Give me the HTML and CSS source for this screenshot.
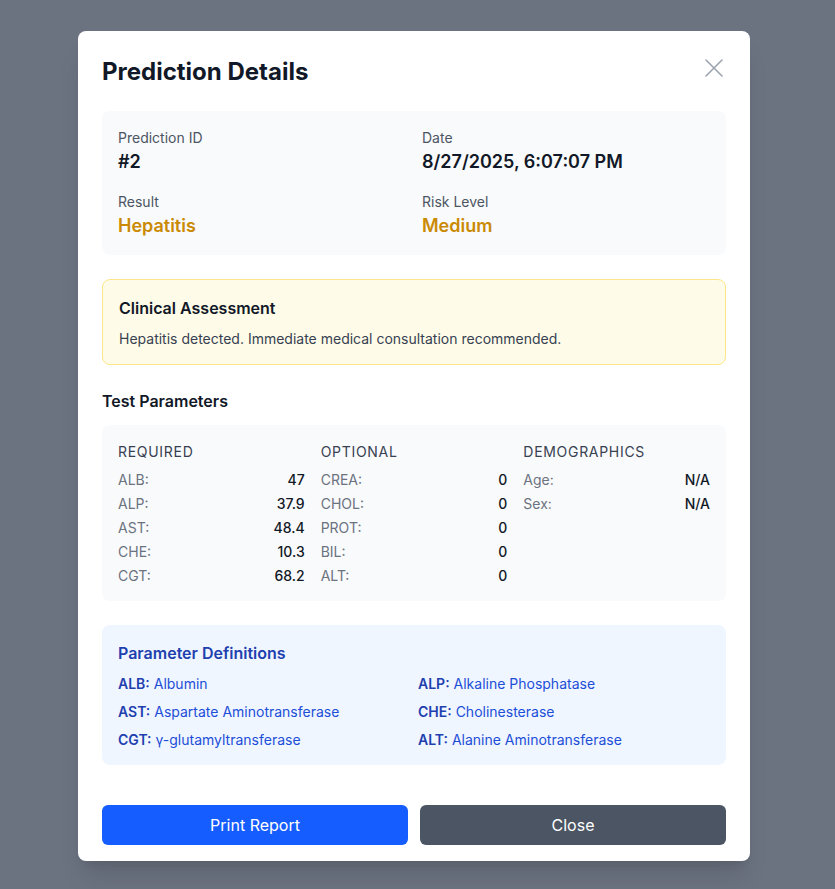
FILE: index.html
```html
<!DOCTYPE html>
<html lang="en">
<head>
<meta charset="utf-8">
<title>Prediction Details</title>
<link rel="stylesheet" href="styles.css">
</head>
<body>
<div class="overlay">
  <div class="modal">
    <div class="modal-header">
      <h2 class="title">Prediction Details</h2>
      <button class="close-x" aria-label="Close">
        <svg width="24" height="24" viewBox="0 0 24 24" fill="none" stroke="currentColor" stroke-width="1.6" stroke-linecap="round"><path d="M4 4L20 20M20 4L4 20"/></svg>
      </button>
    </div>

    <div class="info-box">
      <div class="info-item">
        <div class="info-label">Prediction ID</div>
        <div class="info-value">#2</div>
      </div>
      <div class="info-item">
        <div class="info-label">Date</div>
        <div class="info-value">8/27/2025, 6:07:07 PM</div>
      </div>
      <div class="info-item">
        <div class="info-label">Result</div>
        <div class="info-value warn">Hepatitis</div>
      </div>
      <div class="info-item">
        <div class="info-label">Risk Level</div>
        <div class="info-value warn">Medium</div>
      </div>
    </div>

    <div class="assessment">
      <h3 class="assessment-title">Clinical Assessment</h3>
      <p class="assessment-text">Hepatitis detected. Immediate medical consultation recommended.</p>
    </div>

    <h3 class="section-title">Test Parameters</h3>
    <div class="params-box">
      <div class="param-col">
        <div class="param-head">REQUIRED</div>
        <div class="param-row"><span class="pl">ALB:</span><span class="pv">47</span></div>
        <div class="param-row"><span class="pl">ALP:</span><span class="pv">37.9</span></div>
        <div class="param-row"><span class="pl">AST:</span><span class="pv">48.4</span></div>
        <div class="param-row"><span class="pl">CHE:</span><span class="pv">10.3</span></div>
        <div class="param-row"><span class="pl">CGT:</span><span class="pv">68.2</span></div>
      </div>
      <div class="param-col">
        <div class="param-head">OPTIONAL</div>
        <div class="param-row"><span class="pl">CREA:</span><span class="pv">0</span></div>
        <div class="param-row"><span class="pl">CHOL:</span><span class="pv">0</span></div>
        <div class="param-row"><span class="pl">PROT:</span><span class="pv">0</span></div>
        <div class="param-row"><span class="pl">BIL:</span><span class="pv">0</span></div>
        <div class="param-row"><span class="pl">ALT:</span><span class="pv">0</span></div>
      </div>
      <div class="param-col">
        <div class="param-head">DEMOGRAPHICS</div>
        <div class="param-row"><span class="pl">Age:</span><span class="pv">N/A</span></div>
        <div class="param-row"><span class="pl">Sex:</span><span class="pv">N/A</span></div>
      </div>
    </div>

    <div class="defs">
      <h3 class="defs-title">Parameter Definitions</h3>
      <div class="defs-grid">
        <div class="def"><strong>ALB:</strong> Albumin</div>
        <div class="def"><strong>ALP:</strong> Alkaline Phosphatase</div>
        <div class="def"><strong>AST:</strong> Aspartate Aminotransferase</div>
        <div class="def"><strong>CHE:</strong> Cholinesterase</div>
        <div class="def"><strong>CGT:</strong> γ-glutamyltransferase</div>
        <div class="def"><strong>ALT:</strong> Alanine Aminotransferase</div>
      </div>
    </div>

    <div class="actions">
      <button class="btn btn-primary">Print Report</button>
      <button class="btn btn-secondary">Close</button>
    </div>
  </div>
</div>
</body>
</html>
```

FILE: styles.css
```css
* { box-sizing: border-box; }
html, body { margin: 0; padding: 0; }
body {
  font-family: Inter, "Noto Sans", "Liberation Sans", sans-serif;
  background: #6b7280;
  color: #111827;
  width: 835px;
  height: 889px;
  overflow: hidden;
}
.overlay {
  width: 835px;
  height: 889px;
  display: flex;
  justify-content: flex-start;
  padding: 31px 0 0 78px;
}
.modal {
  width: 672px;
  height: 830px;
  background: #fff;
  border-radius: 8px;
  padding: 25px 24px 16px;
  box-shadow: 0 20px 25px -5px rgba(0,0,0,0.1), 0 8px 10px -6px rgba(0,0,0,0.1);
}
.modal-header {
  display: flex;
  justify-content: space-between;
  align-items: flex-start;
  margin-bottom: 23px;
}
.title {
  margin: 0;
  font-size: 24px;
  line-height: 32px;
  font-weight: 700;
  color: #111827;
}
.close-x {
  border: 0;
  background: none;
  padding: 0;
  margin: 0;
  color: #9ca3af;
  width: 24px;
  height: 24px;
  cursor: pointer;
  display: flex;
}
.info-box {
  background: #f9fafb;
  border-radius: 8px;
  padding: 17px 16px 15px;
  display: grid;
  grid-template-columns: 1fr 1fr;
  column-gap: 16px;
  row-gap: 16px;
  margin-bottom: 24px;
}
.info-label {
  font-size: 14px;
  line-height: 20px;
  color: #4b5563;
}
.info-value {
  font-size: 18px;
  line-height: 28px;
  font-weight: 600;
  color: #111827;
}
.info-value.warn { color: #ca8a04; }
.assessment {
  background: #fefce8;
  border: 1px solid #fde68a;
  border-radius: 8px;
  padding: 16px 16px 15px;
  margin-bottom: 24px;
}
.assessment-title {
  margin: 0 0 9px;
  font-size: 16px;
  line-height: 24px;
  font-weight: 600;
  color: #111827;
}
.assessment-text {
  margin: 0;
  font-size: 14px;
  line-height: 20px;
  color: #374151;
}
.section-title {
  margin: 0 0 12px;
  font-size: 16px;
  line-height: 24px;
  font-weight: 600;
  color: #111827;
}
.params-box {
  background: #f9fafb;
  border-radius: 8px;
  padding: 17px 16px 15px;
  display: grid;
  grid-template-columns: repeat(3, 1fr);
  column-gap: 16px;
  margin-bottom: 24px;
}
.param-col {
  display: flex;
  flex-direction: column;
  gap: 4px;
}
.param-head {
  font-size: 14px;
  line-height: 20px;
  font-weight: 400;
  letter-spacing: 0.05em;
  color: #374151;
  margin-bottom: 4px;
}
.param-row {
  display: flex;
  justify-content: space-between;
  font-size: 14px;
  line-height: 20px;
}
.pl { color: #6b7280; }
.pv { color: #111827; font-weight: 500; }
.defs {
  background: #eff6ff;
  border-radius: 8px;
  padding: 16px 16px 15px;
}
.defs-title {
  margin: 0 0 9px;
  font-size: 16px;
  line-height: 24px;
  font-weight: 600;
  color: #1e40af;
}
.defs-grid {
  display: grid;
  grid-template-columns: 1fr 1fr;
  gap: 8px;
}
.def {
  font-size: 14px;
  line-height: 20px;
  color: #1d4ed8;
}
.def strong { font-weight: 600; color: #1e40af; }
.actions {
  display: flex;
  gap: 12px;
  margin-top: 40px;
}
.btn {
  flex: 1;
  height: 40px;
  border: 0;
  border-radius: 6px;
  color: #fff;
  font-family: inherit;
  font-size: 16px;
  cursor: pointer;
}
.btn-primary { background: #165dff; }
.btn-secondary { background: #4b5563; }
```
